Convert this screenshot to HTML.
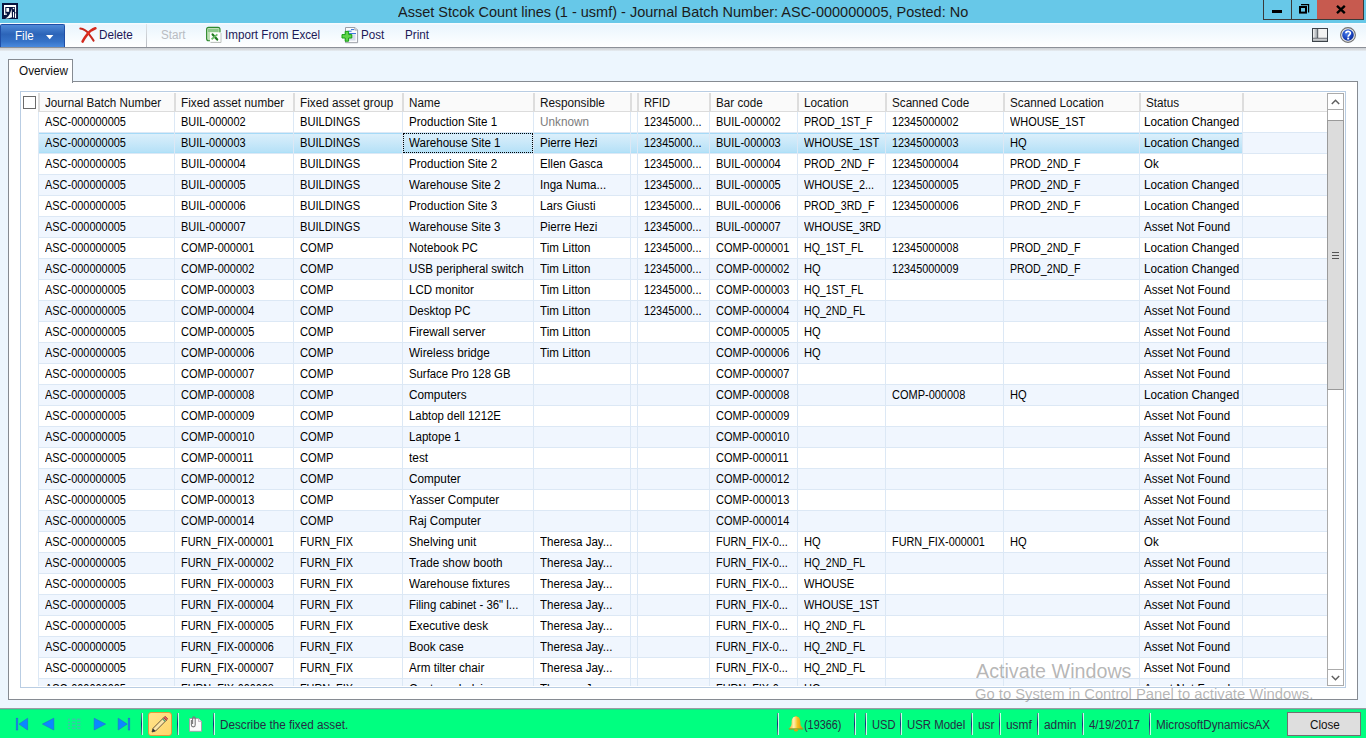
<!DOCTYPE html><html><head><meta charset="utf-8"><style>
*{box-sizing:border-box}
html,body{margin:0;padding:0}
body{width:1366px;height:738px;overflow:hidden;position:relative;background:#edf6fe;font-family:"Liberation Sans",sans-serif;color:#000}
.t{position:absolute;white-space:pre;transform-origin:0 0}
.a{position:absolute}
</style></head><body>

<div class="a" style="left:0;top:0;width:1366px;height:23px;background:#67c8e8"></div>
<svg class="a" style="left:2px;top:3px" width="16" height="16" viewBox="0 0 16 16">
<rect width="16" height="16" fill="#07133f"/>
<rect x="2" y="2" width="12" height="2" fill="#fff"/>
<rect x="2" y="2" width="1.3" height="10" fill="#fff"/>
<rect x="2" y="10.6" width="3" height="1.1" fill="#fff"/>
<rect x="12.9" y="2" width="1.2" height="7.5" fill="#fff"/>
<rect x="4.3" y="5" width="2.8" height="3.8" fill="#fff"/>
<path d="M3.2 15.5 C6 14.2 8.4 11.5 9.6 5.2 L10 14.2 C8 15 5.5 15.5 3.2 15.5z" fill="#fff"/>
<circle cx="11.5" cy="5.5" r="0.8" fill="#fff"/>
<rect x="11" y="9" width="1" height="5.5" fill="#fff"/>
<rect x="12.9" y="10.2" width="1.2" height="4.8" fill="#fff"/>
</svg>
<span class="t" style="left:398px;top:3px;font-size:15px;line-height:17px;color:#1b1b1b;transform:scaleX(0.966);">Asset Stcok Count lines (1 - usmf) - Journal Batch Number: ASC-000000005, Posted: No</span>
<div class="a" style="left:1263px;top:0;width:29px;height:20px;border-left:1px solid #3a3a3a;border-bottom:1px solid #3a3a3a;border-right:1px solid #3a3a3a;background:#67c8e8"></div>
<div class="a" style="left:1272px;top:10px;width:10px;height:3px;background:#000"></div>
<div class="a" style="left:1292px;top:0;width:25px;height:20px;border-bottom:1px solid #3a3a3a;background:#67c8e8"></div>
<svg class="a" style="left:1299px;top:4px" width="12" height="11" viewBox="0 0 12 11"><rect x="1" y="3" width="6" height="5.6" fill="none" stroke="#000" stroke-width="2"/><path d="M2 0.6H9.6V8.4" fill="none" stroke="#000" stroke-width="1.2"/></svg>
<div class="a" style="left:1317px;top:0;width:47px;height:20px;border-bottom:1px solid #3a3a3a;border-right:1px solid #3a3a3a;background:#c75a4f"></div>
<svg class="a" style="left:1336px;top:5px" width="10" height="9" viewBox="0 0 10 9"><path d="M1 0.8L8.8 8.2M8.8 0.8L1 8.2" stroke="#000" stroke-width="2.3"/></svg>
<div class="a" style="left:0;top:23px;width:1366px;height:24px;background:linear-gradient(#f6fbff 0px,#f6fbff 1px,#eaf5fd 2px,#ffffff)"></div>
<div class="a" style="left:0;top:47px;width:1366px;height:1px;background:#8c9098"></div>
<div class="a" style="left:0;top:48px;width:1366px;height:3px;background:linear-gradient(#cdd0d4,#d9dce0 55%,#e8eef4)"></div>
<div class="a" style="left:0px;top:24px;width:65px;height:23px;border-radius:2px 2px 0 0;background:linear-gradient(#4f8ad8,#2c64b8 42%,#3572c8 75%,#4a8ade);border:1px solid #1f4ea6;border-bottom:none"></div>
<span class="t" style="left:15px;top:29px;font-size:12px;line-height:14px;color:#ffffff;transform:scaleX(0.967);">File</span>
<svg class="a" style="left:46px;top:35px" width="8" height="5" viewBox="0 0 8 5"><path d="M0 0h7.4L3.7 4.2z" fill="#fff"/></svg>
<svg class="a" style="left:76px;top:24px" width="24" height="22" viewBox="0 0 24 22">
<path d="M4.3 4.6 C8 5 10.6 7 12.6 9.6 C14.6 12.2 16.3 14.6 17.6 16.6" fill="none" stroke="#c8281c" stroke-width="2" stroke-linecap="round"/>
<path d="M19.4 4.3 C16 5.4 13.4 7.6 11.4 10.2 C9.2 13 7.4 15.6 6.6 17.6" fill="none" stroke="#d42a1e" stroke-width="2.6" stroke-linecap="round"/>
<path d="M12 9 L13 10" stroke="#f03020" stroke-width="2"/>
</svg>
<span class="t" style="left:99px;top:28px;font-size:12px;line-height:14px;color:#1c1857;transform:scaleX(0.975);">Delete</span>
<div class="a" style="left:146px;top:24px;width:1px;height:23px;background:linear-gradient(#e0e4e8,#b8bcc2)"></div>
<span class="t" style="left:161px;top:28px;font-size:12px;line-height:14px;color:#b9bcc2;transform:scaleX(0.971);">Start</span>
<svg class="a" style="left:202px;top:24px" width="24" height="22" viewBox="0 0 24 22">
<rect x="4.6" y="3.4" width="13.4" height="13.4" rx="2" fill="#bfe0b8" stroke="#2f8a2f" stroke-width="1.1"/>
<rect x="6" y="5" width="10.5" height="3" fill="#8cc88a"/>
<rect x="8" y="8.4" width="11" height="9.4" fill="#ffffff"/>
<path d="M19 9v9.5h-10.5" fill="none" stroke="#b0b4b0" stroke-width="0.8"/>
<path d="M10.6 10.4 L15.2 15.6" stroke="#1e7a1e" stroke-width="2.2" stroke-linecap="round"/>
<path d="M15.4 10.4 L9.6 15.2" stroke="#6cbc6a" stroke-width="1.8"/>
</svg>
<span class="t" style="left:225px;top:28px;font-size:12px;line-height:14px;color:#1c1857;transform:scaleX(0.971);">Import From Excel</span>
<svg class="a" style="left:338px;top:24px" width="24" height="22" viewBox="0 0 24 22">
<path d="M7.5 3.5h9.5l2.6 2.6v12.6h-12.1z" fill="#fbfbfd" stroke="#9a9ea6" stroke-width="1"/>
<path d="M16.8 3.5v2.6h2.8" fill="#dde" stroke="#9a9ea6" stroke-width="0.8"/>
<path d="M13 5.6h3M9.6 7.2h4M11 9.6h7" stroke="#2a6ad8" stroke-width="1"/>
<rect x="11" y="10.6" width="6.5" height="6" fill="#d6dcea"/>
<path d="M7.2 7.4h3.4v3.2h3.2v3.4h-3.2v3.2h-3.4v-3.2h-3.2v-3.4h3.2z" fill="#5fd44a" stroke="#15a015" stroke-width="1"/>
</svg>
<span class="t" style="left:361px;top:28px;font-size:12px;line-height:14px;color:#1c1857;transform:scaleX(0.970);">Post</span>
<span class="t" style="left:405px;top:28px;font-size:12px;line-height:14px;color:#1c1857;transform:scaleX(0.970);">Print</span>
<svg class="a" style="left:1308px;top:24px" width="24" height="22" viewBox="0 0 24 22">
<defs><linearGradient id="lg1" x1="0" x2="1"><stop offset="0" stop-color="#f4f4f4"/><stop offset="1" stop-color="#9aa0a6"/></linearGradient>
<linearGradient id="lg2" x1="0" x2="0" y1="0" y2="1"><stop offset="0" stop-color="#d8dadc"/><stop offset="1" stop-color="#a4a8ac"/></linearGradient></defs>
<rect x="4.5" y="4.5" width="15" height="13" fill="#f2f2f2" stroke="#3c4249" stroke-width="1"/>
<rect x="5" y="5" width="4.3" height="9" fill="url(#lg1)"/>
<path d="M9.7 5v9M5 14.3h14.5" stroke="#3c4249" stroke-width="0.9"/>
<rect x="5" y="14.8" width="14" height="2.2" fill="url(#lg2)"/>
</svg>
<svg class="a" style="left:1340px;top:27px" width="16" height="16" viewBox="0 0 16 16">
<defs><radialGradient id="hg" cx="0.4" cy="0.35" r="0.7"><stop offset="0" stop-color="#4d7ee8"/><stop offset="0.6" stop-color="#1a45c0"/><stop offset="1" stop-color="#0a2a90"/></radialGradient></defs>
<circle cx="8" cy="8" r="7.4" fill="#ececec" stroke="#707070" stroke-width="1.1"/>
<circle cx="8" cy="8" r="5.8" fill="url(#hg)"/>
<path d="M5.9 6.2 C5.9 3.9 10.4 3.9 10.4 6.1 C10.4 7.8 8.2 7.9 8.2 9.7" fill="none" stroke="#fff" stroke-width="1.7"/>
<rect x="7.2" y="10.6" width="2" height="1.9" fill="#fff"/>
</svg>
<div class="a" style="left:8px;top:81px;width:1350px;height:619px;background:#fff;border:1px solid #868b92"></div>
<div class="a" style="left:8px;top:59px;width:65px;height:24px;background:#fff;border:1px solid #868b92;border-bottom:none"></div>
<span class="t" style="left:19px;top:64px;font-size:12px;line-height:14px;color:#111;transform:scaleX(0.979);">Overview</span>
<div class="a" style="left:20px;top:91px;width:1326px;height:597px;background:#fff;border:1px solid #b9cde3"></div>
<div class="a" style="left:38px;top:93px;width:1289px;height:18px;background:#fafafa"></div>
<div class="a" style="left:38px;top:93px;width:2px;height:18px;background:#dddddd"></div>
<div class="a" style="left:174px;top:93px;width:2px;height:18px;background:#dddddd"></div>
<div class="a" style="left:293px;top:93px;width:2px;height:18px;background:#dddddd"></div>
<div class="a" style="left:402px;top:93px;width:2px;height:18px;background:#dddddd"></div>
<div class="a" style="left:533px;top:93px;width:2px;height:18px;background:#dddddd"></div>
<div class="a" style="left:630px;top:93px;width:2px;height:18px;background:#dddddd"></div>
<div class="a" style="left:637px;top:93px;width:2px;height:18px;background:#dddddd"></div>
<div class="a" style="left:709px;top:93px;width:2px;height:18px;background:#dddddd"></div>
<div class="a" style="left:797px;top:93px;width:2px;height:18px;background:#dddddd"></div>
<div class="a" style="left:885px;top:93px;width:2px;height:18px;background:#dddddd"></div>
<div class="a" style="left:1003px;top:93px;width:2px;height:18px;background:#dddddd"></div>
<div class="a" style="left:1139px;top:93px;width:2px;height:18px;background:#dddddd"></div>
<div class="a" style="left:1242px;top:93px;width:2px;height:18px;background:#dddddd"></div>
<div class="a" style="left:38px;top:111px;width:1289px;height:1px;background:#dcdcdc"></div>
<span class="t" style="left:45px;top:96px;font-size:12px;line-height:14px;color:#111;transform:scaleX(0.972);">Journal Batch Number</span>
<span class="t" style="left:181px;top:96px;font-size:12px;line-height:14px;color:#111;transform:scaleX(0.979);">Fixed asset number</span>
<span class="t" style="left:300px;top:96px;font-size:12px;line-height:14px;color:#111;transform:scaleX(0.978);">Fixed asset group</span>
<span class="t" style="left:409px;top:96px;font-size:12px;line-height:14px;color:#111;transform:scaleX(0.973);">Name</span>
<span class="t" style="left:540px;top:96px;font-size:12px;line-height:14px;color:#111;transform:scaleX(0.982);">Responsible</span>
<span class="t" style="left:644px;top:96px;font-size:12px;line-height:14px;color:#111;transform:scaleX(0.929);">RFID</span>
<span class="t" style="left:716px;top:96px;font-size:12px;line-height:14px;color:#111;transform:scaleX(0.972);">Bar code</span>
<span class="t" style="left:804px;top:96px;font-size:12px;line-height:14px;color:#111;transform:scaleX(0.981);">Location</span>
<span class="t" style="left:892px;top:96px;font-size:12px;line-height:14px;color:#111;transform:scaleX(0.973);">Scanned Code</span>
<span class="t" style="left:1010px;top:96px;font-size:12px;line-height:14px;color:#111;transform:scaleX(0.977);">Scanned Location</span>
<span class="t" style="left:1146px;top:96px;font-size:12px;line-height:14px;color:#111;transform:scaleX(0.976);">Status</span>
<div class="a" style="left:23px;top:96px;width:13px;height:13px;border:1.5px solid #6b6b6b;background:#fff"></div>
<div class="a" style="left:21px;top:112px;width:1306px;height:574px;overflow:hidden">
<div class="a" style="left:17px;top:0px;width:1289px;height:21px;background:#ffffff;border-bottom:1px solid #dce8f5"></div>
<div class="a" style="left:17px;top:21px;width:1289px;height:21px;background:#f0f6fe;border-bottom:1px solid #dce8f5"></div>
<div class="a" style="left:17px;top:21px;width:1204px;height:20px;background:linear-gradient(#dbeffb,#b6e1f7);border-top:1px solid #a6daf7;border-bottom:1px solid #ace0f8"></div>
<div class="a" style="left:17px;top:42px;width:1289px;height:21px;background:#ffffff;border-bottom:1px solid #dce8f5"></div>
<div class="a" style="left:17px;top:63px;width:1289px;height:21px;background:#f0f6fe;border-bottom:1px solid #dce8f5"></div>
<div class="a" style="left:17px;top:84px;width:1289px;height:21px;background:#ffffff;border-bottom:1px solid #dce8f5"></div>
<div class="a" style="left:17px;top:105px;width:1289px;height:21px;background:#f0f6fe;border-bottom:1px solid #dce8f5"></div>
<div class="a" style="left:17px;top:126px;width:1289px;height:21px;background:#ffffff;border-bottom:1px solid #dce8f5"></div>
<div class="a" style="left:17px;top:147px;width:1289px;height:21px;background:#f0f6fe;border-bottom:1px solid #dce8f5"></div>
<div class="a" style="left:17px;top:168px;width:1289px;height:21px;background:#ffffff;border-bottom:1px solid #dce8f5"></div>
<div class="a" style="left:17px;top:189px;width:1289px;height:21px;background:#f0f6fe;border-bottom:1px solid #dce8f5"></div>
<div class="a" style="left:17px;top:210px;width:1289px;height:21px;background:#ffffff;border-bottom:1px solid #dce8f5"></div>
<div class="a" style="left:17px;top:231px;width:1289px;height:21px;background:#f0f6fe;border-bottom:1px solid #dce8f5"></div>
<div class="a" style="left:17px;top:252px;width:1289px;height:21px;background:#ffffff;border-bottom:1px solid #dce8f5"></div>
<div class="a" style="left:17px;top:273px;width:1289px;height:21px;background:#f0f6fe;border-bottom:1px solid #dce8f5"></div>
<div class="a" style="left:17px;top:294px;width:1289px;height:21px;background:#ffffff;border-bottom:1px solid #dce8f5"></div>
<div class="a" style="left:17px;top:315px;width:1289px;height:21px;background:#f0f6fe;border-bottom:1px solid #dce8f5"></div>
<div class="a" style="left:17px;top:336px;width:1289px;height:21px;background:#ffffff;border-bottom:1px solid #dce8f5"></div>
<div class="a" style="left:17px;top:357px;width:1289px;height:21px;background:#f0f6fe;border-bottom:1px solid #dce8f5"></div>
<div class="a" style="left:17px;top:378px;width:1289px;height:21px;background:#ffffff;border-bottom:1px solid #dce8f5"></div>
<div class="a" style="left:17px;top:399px;width:1289px;height:21px;background:#f0f6fe;border-bottom:1px solid #dce8f5"></div>
<div class="a" style="left:17px;top:420px;width:1289px;height:21px;background:#ffffff;border-bottom:1px solid #dce8f5"></div>
<div class="a" style="left:17px;top:441px;width:1289px;height:21px;background:#f0f6fe;border-bottom:1px solid #dce8f5"></div>
<div class="a" style="left:17px;top:462px;width:1289px;height:21px;background:#ffffff;border-bottom:1px solid #dce8f5"></div>
<div class="a" style="left:17px;top:483px;width:1289px;height:21px;background:#f0f6fe;border-bottom:1px solid #dce8f5"></div>
<div class="a" style="left:17px;top:504px;width:1289px;height:21px;background:#ffffff;border-bottom:1px solid #dce8f5"></div>
<div class="a" style="left:17px;top:525px;width:1289px;height:21px;background:#f0f6fe;border-bottom:1px solid #dce8f5"></div>
<div class="a" style="left:17px;top:546px;width:1289px;height:21px;background:#ffffff;border-bottom:1px solid #dce8f5"></div>
<div class="a" style="left:17px;top:567px;width:1289px;height:21px;background:#f0f6fe;border-bottom:1px solid #dce8f5"></div>
<div class="a" style="left:17px;top:0;width:1px;height:575px;background:#dce8f5"></div>
<div class="a" style="left:153px;top:0;width:1px;height:575px;background:#dce8f5"></div>
<div class="a" style="left:272px;top:0;width:1px;height:575px;background:#dce8f5"></div>
<div class="a" style="left:381px;top:0;width:1px;height:575px;background:#dce8f5"></div>
<div class="a" style="left:512px;top:0;width:1px;height:575px;background:#dce8f5"></div>
<div class="a" style="left:609px;top:0;width:1px;height:575px;background:#dce8f5"></div>
<div class="a" style="left:616px;top:0;width:1px;height:575px;background:#dce8f5"></div>
<div class="a" style="left:688px;top:0;width:1px;height:575px;background:#dce8f5"></div>
<div class="a" style="left:776px;top:0;width:1px;height:575px;background:#dce8f5"></div>
<div class="a" style="left:864px;top:0;width:1px;height:575px;background:#dce8f5"></div>
<div class="a" style="left:982px;top:0;width:1px;height:575px;background:#dce8f5"></div>
<div class="a" style="left:1118px;top:0;width:1px;height:575px;background:#dce8f5"></div>
<div class="a" style="left:1221px;top:0;width:1px;height:575px;background:#dce8f5"></div>
<span class="t" style="left:24px;top:3px;font-size:12px;line-height:14px;color:#000;transform:scaleX(0.912);">ASC-000000005</span>
<span class="t" style="left:160px;top:3px;font-size:12px;line-height:14px;color:#000;transform:scaleX(0.914);">BUIL-000002</span>
<span class="t" style="left:279px;top:3px;font-size:12px;line-height:14px;color:#000;transform:scaleX(0.929);">BUILDINGS</span>
<span class="t" style="left:388px;top:3px;font-size:12px;line-height:14px;color:#000;transform:scaleX(0.965);">Production Site 1</span>
<span class="t" style="left:519px;top:3px;font-size:12px;line-height:14px;color:#7c7c7c;transform:scaleX(0.979);">Unknown</span>
<span class="t" style="left:623px;top:3px;font-size:12px;line-height:14px;color:#000;transform:scaleX(0.906);">12345000...</span>
<span class="t" style="left:695px;top:3px;font-size:12px;line-height:14px;color:#000;transform:scaleX(0.914);">BUIL-000002</span>
<span class="t" style="left:783px;top:3px;font-size:12px;line-height:14px;color:#000;transform:scaleX(0.887);">PROD_1ST_F</span>
<span class="t" style="left:871px;top:3px;font-size:12px;line-height:14px;color:#000;transform:scaleX(0.905);">12345000002</span>
<span class="t" style="left:989px;top:3px;font-size:12px;line-height:14px;color:#000;transform:scaleX(0.909);">WHOUSE_1ST</span>
<span class="t" style="left:1123px;top:3px;font-size:12px;line-height:14px;color:#000;transform:scaleX(0.977);">Location Changed</span>
<span class="t" style="left:24px;top:24px;font-size:12px;line-height:14px;color:#000;transform:scaleX(0.912);">ASC-000000005</span>
<span class="t" style="left:160px;top:24px;font-size:12px;line-height:14px;color:#000;transform:scaleX(0.914);">BUIL-000003</span>
<span class="t" style="left:279px;top:24px;font-size:12px;line-height:14px;color:#000;transform:scaleX(0.929);">BUILDINGS</span>
<span class="t" style="left:388px;top:24px;font-size:12px;line-height:14px;color:#000;transform:scaleX(0.964);">Warehouse Site 1</span>
<span class="t" style="left:519px;top:24px;font-size:12px;line-height:14px;color:#000;transform:scaleX(0.967);">Pierre Hezi</span>
<span class="t" style="left:623px;top:24px;font-size:12px;line-height:14px;color:#000;transform:scaleX(0.906);">12345000...</span>
<span class="t" style="left:695px;top:24px;font-size:12px;line-height:14px;color:#000;transform:scaleX(0.914);">BUIL-000003</span>
<span class="t" style="left:783px;top:24px;font-size:12px;line-height:14px;color:#000;transform:scaleX(0.909);">WHOUSE_1ST</span>
<span class="t" style="left:871px;top:24px;font-size:12px;line-height:14px;color:#000;transform:scaleX(0.905);">12345000003</span>
<span class="t" style="left:989px;top:24px;font-size:12px;line-height:14px;color:#000;transform:scaleX(0.929);">HQ</span>
<span class="t" style="left:1123px;top:24px;font-size:12px;line-height:14px;color:#000;transform:scaleX(0.977);">Location Changed</span>
<span class="t" style="left:24px;top:45px;font-size:12px;line-height:14px;color:#000;transform:scaleX(0.912);">ASC-000000005</span>
<span class="t" style="left:160px;top:45px;font-size:12px;line-height:14px;color:#000;transform:scaleX(0.914);">BUIL-000004</span>
<span class="t" style="left:279px;top:45px;font-size:12px;line-height:14px;color:#000;transform:scaleX(0.929);">BUILDINGS</span>
<span class="t" style="left:388px;top:45px;font-size:12px;line-height:14px;color:#000;transform:scaleX(0.965);">Production Site 2</span>
<span class="t" style="left:519px;top:45px;font-size:12px;line-height:14px;color:#000;transform:scaleX(0.968);">Ellen Gasca</span>
<span class="t" style="left:623px;top:45px;font-size:12px;line-height:14px;color:#000;transform:scaleX(0.906);">12345000...</span>
<span class="t" style="left:695px;top:45px;font-size:12px;line-height:14px;color:#000;transform:scaleX(0.914);">BUIL-000004</span>
<span class="t" style="left:783px;top:45px;font-size:12px;line-height:14px;color:#000;transform:scaleX(0.888);">PROD_2ND_F</span>
<span class="t" style="left:871px;top:45px;font-size:12px;line-height:14px;color:#000;transform:scaleX(0.905);">12345000004</span>
<span class="t" style="left:989px;top:45px;font-size:12px;line-height:14px;color:#000;transform:scaleX(0.888);">PROD_2ND_F</span>
<span class="t" style="left:1123px;top:45px;font-size:12px;line-height:14px;color:#000;transform:scaleX(0.953);">Ok</span>
<span class="t" style="left:24px;top:66px;font-size:12px;line-height:14px;color:#000;transform:scaleX(0.912);">ASC-000000005</span>
<span class="t" style="left:160px;top:66px;font-size:12px;line-height:14px;color:#000;transform:scaleX(0.914);">BUIL-000005</span>
<span class="t" style="left:279px;top:66px;font-size:12px;line-height:14px;color:#000;transform:scaleX(0.929);">BUILDINGS</span>
<span class="t" style="left:388px;top:66px;font-size:12px;line-height:14px;color:#000;transform:scaleX(0.964);">Warehouse Site 2</span>
<span class="t" style="left:519px;top:66px;font-size:12px;line-height:14px;color:#000;transform:scaleX(0.962);">Inga Numa...</span>
<span class="t" style="left:623px;top:66px;font-size:12px;line-height:14px;color:#000;transform:scaleX(0.906);">12345000...</span>
<span class="t" style="left:695px;top:66px;font-size:12px;line-height:14px;color:#000;transform:scaleX(0.914);">BUIL-000005</span>
<span class="t" style="left:783px;top:66px;font-size:12px;line-height:14px;color:#000;transform:scaleX(0.905);">WHOUSE_2...</span>
<span class="t" style="left:871px;top:66px;font-size:12px;line-height:14px;color:#000;transform:scaleX(0.905);">12345000005</span>
<span class="t" style="left:989px;top:66px;font-size:12px;line-height:14px;color:#000;transform:scaleX(0.888);">PROD_2ND_F</span>
<span class="t" style="left:1123px;top:66px;font-size:12px;line-height:14px;color:#000;transform:scaleX(0.977);">Location Changed</span>
<span class="t" style="left:24px;top:87px;font-size:12px;line-height:14px;color:#000;transform:scaleX(0.912);">ASC-000000005</span>
<span class="t" style="left:160px;top:87px;font-size:12px;line-height:14px;color:#000;transform:scaleX(0.914);">BUIL-000006</span>
<span class="t" style="left:279px;top:87px;font-size:12px;line-height:14px;color:#000;transform:scaleX(0.929);">BUILDINGS</span>
<span class="t" style="left:388px;top:87px;font-size:12px;line-height:14px;color:#000;transform:scaleX(0.965);">Production Site 3</span>
<span class="t" style="left:519px;top:87px;font-size:12px;line-height:14px;color:#000;transform:scaleX(0.967);">Lars Giusti</span>
<span class="t" style="left:623px;top:87px;font-size:12px;line-height:14px;color:#000;transform:scaleX(0.906);">12345000...</span>
<span class="t" style="left:695px;top:87px;font-size:12px;line-height:14px;color:#000;transform:scaleX(0.914);">BUIL-000006</span>
<span class="t" style="left:783px;top:87px;font-size:12px;line-height:14px;color:#000;transform:scaleX(0.888);">PROD_3RD_F</span>
<span class="t" style="left:871px;top:87px;font-size:12px;line-height:14px;color:#000;transform:scaleX(0.905);">12345000006</span>
<span class="t" style="left:989px;top:87px;font-size:12px;line-height:14px;color:#000;transform:scaleX(0.888);">PROD_2ND_F</span>
<span class="t" style="left:1123px;top:87px;font-size:12px;line-height:14px;color:#000;transform:scaleX(0.977);">Location Changed</span>
<span class="t" style="left:24px;top:108px;font-size:12px;line-height:14px;color:#000;transform:scaleX(0.912);">ASC-000000005</span>
<span class="t" style="left:160px;top:108px;font-size:12px;line-height:14px;color:#000;transform:scaleX(0.914);">BUIL-000007</span>
<span class="t" style="left:279px;top:108px;font-size:12px;line-height:14px;color:#000;transform:scaleX(0.929);">BUILDINGS</span>
<span class="t" style="left:388px;top:108px;font-size:12px;line-height:14px;color:#000;transform:scaleX(0.964);">Warehouse Site 3</span>
<span class="t" style="left:519px;top:108px;font-size:12px;line-height:14px;color:#000;transform:scaleX(0.967);">Pierre Hezi</span>
<span class="t" style="left:623px;top:108px;font-size:12px;line-height:14px;color:#000;transform:scaleX(0.906);">12345000...</span>
<span class="t" style="left:695px;top:108px;font-size:12px;line-height:14px;color:#000;transform:scaleX(0.914);">BUIL-000007</span>
<span class="t" style="left:783px;top:108px;font-size:12px;line-height:14px;color:#000;transform:scaleX(0.909);">WHOUSE_3RD</span>
<span class="t" style="left:1123px;top:108px;font-size:12px;line-height:14px;color:#000;transform:scaleX(0.965);">Asset Not Found</span>
<span class="t" style="left:24px;top:129px;font-size:12px;line-height:14px;color:#000;transform:scaleX(0.912);">ASC-000000005</span>
<span class="t" style="left:160px;top:129px;font-size:12px;line-height:14px;color:#000;transform:scaleX(0.916);">COMP-000001</span>
<span class="t" style="left:279px;top:129px;font-size:12px;line-height:14px;color:#000;transform:scaleX(0.929);">COMP</span>
<span class="t" style="left:388px;top:129px;font-size:12px;line-height:14px;color:#000;transform:scaleX(0.963);">Notebook PC</span>
<span class="t" style="left:519px;top:129px;font-size:12px;line-height:14px;color:#000;transform:scaleX(0.967);">Tim Litton</span>
<span class="t" style="left:623px;top:129px;font-size:12px;line-height:14px;color:#000;transform:scaleX(0.906);">12345000...</span>
<span class="t" style="left:695px;top:129px;font-size:12px;line-height:14px;color:#000;transform:scaleX(0.916);">COMP-000001</span>
<span class="t" style="left:783px;top:129px;font-size:12px;line-height:14px;color:#000;transform:scaleX(0.881);">HQ_1ST_FL</span>
<span class="t" style="left:871px;top:129px;font-size:12px;line-height:14px;color:#000;transform:scaleX(0.905);">12345000008</span>
<span class="t" style="left:989px;top:129px;font-size:12px;line-height:14px;color:#000;transform:scaleX(0.888);">PROD_2ND_F</span>
<span class="t" style="left:1123px;top:129px;font-size:12px;line-height:14px;color:#000;transform:scaleX(0.977);">Location Changed</span>
<span class="t" style="left:24px;top:150px;font-size:12px;line-height:14px;color:#000;transform:scaleX(0.912);">ASC-000000005</span>
<span class="t" style="left:160px;top:150px;font-size:12px;line-height:14px;color:#000;transform:scaleX(0.916);">COMP-000002</span>
<span class="t" style="left:279px;top:150px;font-size:12px;line-height:14px;color:#000;transform:scaleX(0.929);">COMP</span>
<span class="t" style="left:388px;top:150px;font-size:12px;line-height:14px;color:#000;transform:scaleX(0.971);">USB peripheral switch</span>
<span class="t" style="left:519px;top:150px;font-size:12px;line-height:14px;color:#000;transform:scaleX(0.967);">Tim Litton</span>
<span class="t" style="left:623px;top:150px;font-size:12px;line-height:14px;color:#000;transform:scaleX(0.906);">12345000...</span>
<span class="t" style="left:695px;top:150px;font-size:12px;line-height:14px;color:#000;transform:scaleX(0.916);">COMP-000002</span>
<span class="t" style="left:783px;top:150px;font-size:12px;line-height:14px;color:#000;transform:scaleX(0.929);">HQ</span>
<span class="t" style="left:871px;top:150px;font-size:12px;line-height:14px;color:#000;transform:scaleX(0.905);">12345000009</span>
<span class="t" style="left:989px;top:150px;font-size:12px;line-height:14px;color:#000;transform:scaleX(0.888);">PROD_2ND_F</span>
<span class="t" style="left:1123px;top:150px;font-size:12px;line-height:14px;color:#000;transform:scaleX(0.977);">Location Changed</span>
<span class="t" style="left:24px;top:171px;font-size:12px;line-height:14px;color:#000;transform:scaleX(0.912);">ASC-000000005</span>
<span class="t" style="left:160px;top:171px;font-size:12px;line-height:14px;color:#000;transform:scaleX(0.916);">COMP-000003</span>
<span class="t" style="left:279px;top:171px;font-size:12px;line-height:14px;color:#000;transform:scaleX(0.929);">COMP</span>
<span class="t" style="left:388px;top:171px;font-size:12px;line-height:14px;color:#000;transform:scaleX(0.963);">LCD monitor</span>
<span class="t" style="left:519px;top:171px;font-size:12px;line-height:14px;color:#000;transform:scaleX(0.967);">Tim Litton</span>
<span class="t" style="left:623px;top:171px;font-size:12px;line-height:14px;color:#000;transform:scaleX(0.906);">12345000...</span>
<span class="t" style="left:695px;top:171px;font-size:12px;line-height:14px;color:#000;transform:scaleX(0.916);">COMP-000003</span>
<span class="t" style="left:783px;top:171px;font-size:12px;line-height:14px;color:#000;transform:scaleX(0.881);">HQ_1ST_FL</span>
<span class="t" style="left:1123px;top:171px;font-size:12px;line-height:14px;color:#000;transform:scaleX(0.965);">Asset Not Found</span>
<span class="t" style="left:24px;top:192px;font-size:12px;line-height:14px;color:#000;transform:scaleX(0.912);">ASC-000000005</span>
<span class="t" style="left:160px;top:192px;font-size:12px;line-height:14px;color:#000;transform:scaleX(0.916);">COMP-000004</span>
<span class="t" style="left:279px;top:192px;font-size:12px;line-height:14px;color:#000;transform:scaleX(0.929);">COMP</span>
<span class="t" style="left:388px;top:192px;font-size:12px;line-height:14px;color:#000;transform:scaleX(0.960);">Desktop PC</span>
<span class="t" style="left:519px;top:192px;font-size:12px;line-height:14px;color:#000;transform:scaleX(0.967);">Tim Litton</span>
<span class="t" style="left:623px;top:192px;font-size:12px;line-height:14px;color:#000;transform:scaleX(0.906);">12345000...</span>
<span class="t" style="left:695px;top:192px;font-size:12px;line-height:14px;color:#000;transform:scaleX(0.916);">COMP-000004</span>
<span class="t" style="left:783px;top:192px;font-size:12px;line-height:14px;color:#000;transform:scaleX(0.883);">HQ_2ND_FL</span>
<span class="t" style="left:1123px;top:192px;font-size:12px;line-height:14px;color:#000;transform:scaleX(0.965);">Asset Not Found</span>
<span class="t" style="left:24px;top:213px;font-size:12px;line-height:14px;color:#000;transform:scaleX(0.912);">ASC-000000005</span>
<span class="t" style="left:160px;top:213px;font-size:12px;line-height:14px;color:#000;transform:scaleX(0.916);">COMP-000005</span>
<span class="t" style="left:279px;top:213px;font-size:12px;line-height:14px;color:#000;transform:scaleX(0.929);">COMP</span>
<span class="t" style="left:388px;top:213px;font-size:12px;line-height:14px;color:#000;transform:scaleX(0.980);">Firewall server</span>
<span class="t" style="left:519px;top:213px;font-size:12px;line-height:14px;color:#000;transform:scaleX(0.967);">Tim Litton</span>
<span class="t" style="left:695px;top:213px;font-size:12px;line-height:14px;color:#000;transform:scaleX(0.916);">COMP-000005</span>
<span class="t" style="left:783px;top:213px;font-size:12px;line-height:14px;color:#000;transform:scaleX(0.929);">HQ</span>
<span class="t" style="left:1123px;top:213px;font-size:12px;line-height:14px;color:#000;transform:scaleX(0.965);">Asset Not Found</span>
<span class="t" style="left:24px;top:234px;font-size:12px;line-height:14px;color:#000;transform:scaleX(0.912);">ASC-000000005</span>
<span class="t" style="left:160px;top:234px;font-size:12px;line-height:14px;color:#000;transform:scaleX(0.916);">COMP-000006</span>
<span class="t" style="left:279px;top:234px;font-size:12px;line-height:14px;color:#000;transform:scaleX(0.929);">COMP</span>
<span class="t" style="left:388px;top:234px;font-size:12px;line-height:14px;color:#000;transform:scaleX(0.977);">Wireless bridge</span>
<span class="t" style="left:519px;top:234px;font-size:12px;line-height:14px;color:#000;transform:scaleX(0.967);">Tim Litton</span>
<span class="t" style="left:695px;top:234px;font-size:12px;line-height:14px;color:#000;transform:scaleX(0.916);">COMP-000006</span>
<span class="t" style="left:783px;top:234px;font-size:12px;line-height:14px;color:#000;transform:scaleX(0.929);">HQ</span>
<span class="t" style="left:1123px;top:234px;font-size:12px;line-height:14px;color:#000;transform:scaleX(0.965);">Asset Not Found</span>
<span class="t" style="left:24px;top:255px;font-size:12px;line-height:14px;color:#000;transform:scaleX(0.912);">ASC-000000005</span>
<span class="t" style="left:160px;top:255px;font-size:12px;line-height:14px;color:#000;transform:scaleX(0.916);">COMP-000007</span>
<span class="t" style="left:279px;top:255px;font-size:12px;line-height:14px;color:#000;transform:scaleX(0.929);">COMP</span>
<span class="t" style="left:388px;top:255px;font-size:12px;line-height:14px;color:#000;transform:scaleX(0.945);">Surface Pro 128 GB</span>
<span class="t" style="left:695px;top:255px;font-size:12px;line-height:14px;color:#000;transform:scaleX(0.916);">COMP-000007</span>
<span class="t" style="left:1123px;top:255px;font-size:12px;line-height:14px;color:#000;transform:scaleX(0.965);">Asset Not Found</span>
<span class="t" style="left:24px;top:276px;font-size:12px;line-height:14px;color:#000;transform:scaleX(0.912);">ASC-000000005</span>
<span class="t" style="left:160px;top:276px;font-size:12px;line-height:14px;color:#000;transform:scaleX(0.916);">COMP-000008</span>
<span class="t" style="left:279px;top:276px;font-size:12px;line-height:14px;color:#000;transform:scaleX(0.929);">COMP</span>
<span class="t" style="left:388px;top:276px;font-size:12px;line-height:14px;color:#000;transform:scaleX(0.981);">Computers</span>
<span class="t" style="left:695px;top:276px;font-size:12px;line-height:14px;color:#000;transform:scaleX(0.916);">COMP-000008</span>
<span class="t" style="left:871px;top:276px;font-size:12px;line-height:14px;color:#000;transform:scaleX(0.916);">COMP-000008</span>
<span class="t" style="left:989px;top:276px;font-size:12px;line-height:14px;color:#000;transform:scaleX(0.929);">HQ</span>
<span class="t" style="left:1123px;top:276px;font-size:12px;line-height:14px;color:#000;transform:scaleX(0.977);">Location Changed</span>
<span class="t" style="left:24px;top:297px;font-size:12px;line-height:14px;color:#000;transform:scaleX(0.912);">ASC-000000005</span>
<span class="t" style="left:160px;top:297px;font-size:12px;line-height:14px;color:#000;transform:scaleX(0.916);">COMP-000009</span>
<span class="t" style="left:279px;top:297px;font-size:12px;line-height:14px;color:#000;transform:scaleX(0.929);">COMP</span>
<span class="t" style="left:388px;top:297px;font-size:12px;line-height:14px;color:#000;transform:scaleX(0.950);">Labtop dell 1212E</span>
<span class="t" style="left:695px;top:297px;font-size:12px;line-height:14px;color:#000;transform:scaleX(0.916);">COMP-000009</span>
<span class="t" style="left:1123px;top:297px;font-size:12px;line-height:14px;color:#000;transform:scaleX(0.965);">Asset Not Found</span>
<span class="t" style="left:24px;top:318px;font-size:12px;line-height:14px;color:#000;transform:scaleX(0.912);">ASC-000000005</span>
<span class="t" style="left:160px;top:318px;font-size:12px;line-height:14px;color:#000;transform:scaleX(0.916);">COMP-000010</span>
<span class="t" style="left:279px;top:318px;font-size:12px;line-height:14px;color:#000;transform:scaleX(0.929);">COMP</span>
<span class="t" style="left:388px;top:318px;font-size:12px;line-height:14px;color:#000;transform:scaleX(0.965);">Laptope 1</span>
<span class="t" style="left:695px;top:318px;font-size:12px;line-height:14px;color:#000;transform:scaleX(0.916);">COMP-000010</span>
<span class="t" style="left:1123px;top:318px;font-size:12px;line-height:14px;color:#000;transform:scaleX(0.965);">Asset Not Found</span>
<span class="t" style="left:24px;top:339px;font-size:12px;line-height:14px;color:#000;transform:scaleX(0.912);">ASC-000000005</span>
<span class="t" style="left:160px;top:339px;font-size:12px;line-height:14px;color:#000;transform:scaleX(0.916);">COMP-000011</span>
<span class="t" style="left:279px;top:339px;font-size:12px;line-height:14px;color:#000;transform:scaleX(0.929);">COMP</span>
<span class="t" style="left:388px;top:339px;font-size:12px;line-height:14px;color:#000;transform:scaleX(0.990);">test</span>
<span class="t" style="left:695px;top:339px;font-size:12px;line-height:14px;color:#000;transform:scaleX(0.916);">COMP-000011</span>
<span class="t" style="left:1123px;top:339px;font-size:12px;line-height:14px;color:#000;transform:scaleX(0.965);">Asset Not Found</span>
<span class="t" style="left:24px;top:360px;font-size:12px;line-height:14px;color:#000;transform:scaleX(0.912);">ASC-000000005</span>
<span class="t" style="left:160px;top:360px;font-size:12px;line-height:14px;color:#000;transform:scaleX(0.916);">COMP-000012</span>
<span class="t" style="left:279px;top:360px;font-size:12px;line-height:14px;color:#000;transform:scaleX(0.929);">COMP</span>
<span class="t" style="left:388px;top:360px;font-size:12px;line-height:14px;color:#000;transform:scaleX(0.980);">Computer</span>
<span class="t" style="left:695px;top:360px;font-size:12px;line-height:14px;color:#000;transform:scaleX(0.916);">COMP-000012</span>
<span class="t" style="left:1123px;top:360px;font-size:12px;line-height:14px;color:#000;transform:scaleX(0.965);">Asset Not Found</span>
<span class="t" style="left:24px;top:381px;font-size:12px;line-height:14px;color:#000;transform:scaleX(0.912);">ASC-000000005</span>
<span class="t" style="left:160px;top:381px;font-size:12px;line-height:14px;color:#000;transform:scaleX(0.916);">COMP-000013</span>
<span class="t" style="left:279px;top:381px;font-size:12px;line-height:14px;color:#000;transform:scaleX(0.929);">COMP</span>
<span class="t" style="left:388px;top:381px;font-size:12px;line-height:14px;color:#000;transform:scaleX(0.975);">Yasser Computer</span>
<span class="t" style="left:695px;top:381px;font-size:12px;line-height:14px;color:#000;transform:scaleX(0.916);">COMP-000013</span>
<span class="t" style="left:1123px;top:381px;font-size:12px;line-height:14px;color:#000;transform:scaleX(0.965);">Asset Not Found</span>
<span class="t" style="left:24px;top:402px;font-size:12px;line-height:14px;color:#000;transform:scaleX(0.912);">ASC-000000005</span>
<span class="t" style="left:160px;top:402px;font-size:12px;line-height:14px;color:#000;transform:scaleX(0.916);">COMP-000014</span>
<span class="t" style="left:279px;top:402px;font-size:12px;line-height:14px;color:#000;transform:scaleX(0.929);">COMP</span>
<span class="t" style="left:388px;top:402px;font-size:12px;line-height:14px;color:#000;transform:scaleX(0.971);">Raj Computer</span>
<span class="t" style="left:695px;top:402px;font-size:12px;line-height:14px;color:#000;transform:scaleX(0.916);">COMP-000014</span>
<span class="t" style="left:1123px;top:402px;font-size:12px;line-height:14px;color:#000;transform:scaleX(0.965);">Asset Not Found</span>
<span class="t" style="left:24px;top:423px;font-size:12px;line-height:14px;color:#000;transform:scaleX(0.912);">ASC-000000005</span>
<span class="t" style="left:160px;top:423px;font-size:12px;line-height:14px;color:#000;transform:scaleX(0.904);">FURN_FIX-000001</span>
<span class="t" style="left:279px;top:423px;font-size:12px;line-height:14px;color:#000;transform:scaleX(0.903);">FURN_FIX</span>
<span class="t" style="left:388px;top:423px;font-size:12px;line-height:14px;color:#000;transform:scaleX(0.978);">Shelving unit</span>
<span class="t" style="left:519px;top:423px;font-size:12px;line-height:14px;color:#000;transform:scaleX(0.964);">Theresa Jay...</span>
<span class="t" style="left:695px;top:423px;font-size:12px;line-height:14px;color:#000;transform:scaleX(0.904);">FURN_FIX-0...</span>
<span class="t" style="left:783px;top:423px;font-size:12px;line-height:14px;color:#000;transform:scaleX(0.929);">HQ</span>
<span class="t" style="left:871px;top:423px;font-size:12px;line-height:14px;color:#000;transform:scaleX(0.904);">FURN_FIX-000001</span>
<span class="t" style="left:989px;top:423px;font-size:12px;line-height:14px;color:#000;transform:scaleX(0.929);">HQ</span>
<span class="t" style="left:1123px;top:423px;font-size:12px;line-height:14px;color:#000;transform:scaleX(0.953);">Ok</span>
<span class="t" style="left:24px;top:444px;font-size:12px;line-height:14px;color:#000;transform:scaleX(0.912);">ASC-000000005</span>
<span class="t" style="left:160px;top:444px;font-size:12px;line-height:14px;color:#000;transform:scaleX(0.904);">FURN_FIX-000002</span>
<span class="t" style="left:279px;top:444px;font-size:12px;line-height:14px;color:#000;transform:scaleX(0.903);">FURN_FIX</span>
<span class="t" style="left:388px;top:444px;font-size:12px;line-height:14px;color:#000;transform:scaleX(0.978);">Trade show booth</span>
<span class="t" style="left:519px;top:444px;font-size:12px;line-height:14px;color:#000;transform:scaleX(0.964);">Theresa Jay...</span>
<span class="t" style="left:695px;top:444px;font-size:12px;line-height:14px;color:#000;transform:scaleX(0.904);">FURN_FIX-0...</span>
<span class="t" style="left:783px;top:444px;font-size:12px;line-height:14px;color:#000;transform:scaleX(0.883);">HQ_2ND_FL</span>
<span class="t" style="left:1123px;top:444px;font-size:12px;line-height:14px;color:#000;transform:scaleX(0.965);">Asset Not Found</span>
<span class="t" style="left:24px;top:465px;font-size:12px;line-height:14px;color:#000;transform:scaleX(0.912);">ASC-000000005</span>
<span class="t" style="left:160px;top:465px;font-size:12px;line-height:14px;color:#000;transform:scaleX(0.904);">FURN_FIX-000003</span>
<span class="t" style="left:279px;top:465px;font-size:12px;line-height:14px;color:#000;transform:scaleX(0.903);">FURN_FIX</span>
<span class="t" style="left:388px;top:465px;font-size:12px;line-height:14px;color:#000;transform:scaleX(0.980);">Warehouse fixtures</span>
<span class="t" style="left:519px;top:465px;font-size:12px;line-height:14px;color:#000;transform:scaleX(0.964);">Theresa Jay...</span>
<span class="t" style="left:695px;top:465px;font-size:12px;line-height:14px;color:#000;transform:scaleX(0.904);">FURN_FIX-0...</span>
<span class="t" style="left:783px;top:465px;font-size:12px;line-height:14px;color:#000;transform:scaleX(0.929);">WHOUSE</span>
<span class="t" style="left:1123px;top:465px;font-size:12px;line-height:14px;color:#000;transform:scaleX(0.965);">Asset Not Found</span>
<span class="t" style="left:24px;top:486px;font-size:12px;line-height:14px;color:#000;transform:scaleX(0.912);">ASC-000000005</span>
<span class="t" style="left:160px;top:486px;font-size:12px;line-height:14px;color:#000;transform:scaleX(0.904);">FURN_FIX-000004</span>
<span class="t" style="left:279px;top:486px;font-size:12px;line-height:14px;color:#000;transform:scaleX(0.903);">FURN_FIX</span>
<span class="t" style="left:388px;top:486px;font-size:12px;line-height:14px;color:#000;transform:scaleX(0.951);">Filing cabinet - 36&quot; l...</span>
<span class="t" style="left:519px;top:486px;font-size:12px;line-height:14px;color:#000;transform:scaleX(0.964);">Theresa Jay...</span>
<span class="t" style="left:695px;top:486px;font-size:12px;line-height:14px;color:#000;transform:scaleX(0.904);">FURN_FIX-0...</span>
<span class="t" style="left:783px;top:486px;font-size:12px;line-height:14px;color:#000;transform:scaleX(0.909);">WHOUSE_1ST</span>
<span class="t" style="left:1123px;top:486px;font-size:12px;line-height:14px;color:#000;transform:scaleX(0.965);">Asset Not Found</span>
<span class="t" style="left:24px;top:507px;font-size:12px;line-height:14px;color:#000;transform:scaleX(0.912);">ASC-000000005</span>
<span class="t" style="left:160px;top:507px;font-size:12px;line-height:14px;color:#000;transform:scaleX(0.904);">FURN_FIX-000005</span>
<span class="t" style="left:279px;top:507px;font-size:12px;line-height:14px;color:#000;transform:scaleX(0.903);">FURN_FIX</span>
<span class="t" style="left:388px;top:507px;font-size:12px;line-height:14px;color:#000;transform:scaleX(0.979);">Executive desk</span>
<span class="t" style="left:519px;top:507px;font-size:12px;line-height:14px;color:#000;transform:scaleX(0.964);">Theresa Jay...</span>
<span class="t" style="left:695px;top:507px;font-size:12px;line-height:14px;color:#000;transform:scaleX(0.904);">FURN_FIX-0...</span>
<span class="t" style="left:783px;top:507px;font-size:12px;line-height:14px;color:#000;transform:scaleX(0.883);">HQ_2ND_FL</span>
<span class="t" style="left:1123px;top:507px;font-size:12px;line-height:14px;color:#000;transform:scaleX(0.965);">Asset Not Found</span>
<span class="t" style="left:24px;top:528px;font-size:12px;line-height:14px;color:#000;transform:scaleX(0.912);">ASC-000000005</span>
<span class="t" style="left:160px;top:528px;font-size:12px;line-height:14px;color:#000;transform:scaleX(0.904);">FURN_FIX-000006</span>
<span class="t" style="left:279px;top:528px;font-size:12px;line-height:14px;color:#000;transform:scaleX(0.903);">FURN_FIX</span>
<span class="t" style="left:388px;top:528px;font-size:12px;line-height:14px;color:#000;transform:scaleX(0.975);">Book case</span>
<span class="t" style="left:519px;top:528px;font-size:12px;line-height:14px;color:#000;transform:scaleX(0.964);">Theresa Jay...</span>
<span class="t" style="left:695px;top:528px;font-size:12px;line-height:14px;color:#000;transform:scaleX(0.904);">FURN_FIX-0...</span>
<span class="t" style="left:783px;top:528px;font-size:12px;line-height:14px;color:#000;transform:scaleX(0.883);">HQ_2ND_FL</span>
<span class="t" style="left:1123px;top:528px;font-size:12px;line-height:14px;color:#000;transform:scaleX(0.965);">Asset Not Found</span>
<span class="t" style="left:24px;top:549px;font-size:12px;line-height:14px;color:#000;transform:scaleX(0.912);">ASC-000000005</span>
<span class="t" style="left:160px;top:549px;font-size:12px;line-height:14px;color:#000;transform:scaleX(0.904);">FURN_FIX-000007</span>
<span class="t" style="left:279px;top:549px;font-size:12px;line-height:14px;color:#000;transform:scaleX(0.903);">FURN_FIX</span>
<span class="t" style="left:388px;top:549px;font-size:12px;line-height:14px;color:#000;transform:scaleX(0.974);">Arm tilter chair</span>
<span class="t" style="left:519px;top:549px;font-size:12px;line-height:14px;color:#000;transform:scaleX(0.964);">Theresa Jay...</span>
<span class="t" style="left:695px;top:549px;font-size:12px;line-height:14px;color:#000;transform:scaleX(0.904);">FURN_FIX-0...</span>
<span class="t" style="left:783px;top:549px;font-size:12px;line-height:14px;color:#000;transform:scaleX(0.883);">HQ_2ND_FL</span>
<span class="t" style="left:1123px;top:549px;font-size:12px;line-height:14px;color:#000;transform:scaleX(0.965);">Asset Not Found</span>
<span class="t" style="left:24px;top:570px;font-size:12px;line-height:14px;color:#000;transform:scaleX(0.912);">ASC-000000005</span>
<span class="t" style="left:160px;top:570px;font-size:12px;line-height:14px;color:#000;transform:scaleX(0.904);">FURN_FIX-000008</span>
<span class="t" style="left:279px;top:570px;font-size:12px;line-height:14px;color:#000;transform:scaleX(0.903);">FURN_FIX</span>
<span class="t" style="left:388px;top:570px;font-size:12px;line-height:14px;color:#000;transform:scaleX(0.980);">Custom shelving</span>
<span class="t" style="left:519px;top:570px;font-size:12px;line-height:14px;color:#000;transform:scaleX(0.964);">Theresa Jay...</span>
<span class="t" style="left:695px;top:570px;font-size:12px;line-height:14px;color:#000;transform:scaleX(0.904);">FURN_FIX-0...</span>
<span class="t" style="left:783px;top:570px;font-size:12px;line-height:14px;color:#000;transform:scaleX(0.929);">HQ</span>
<span class="t" style="left:1123px;top:570px;font-size:12px;line-height:14px;color:#000;transform:scaleX(0.965);">Asset Not Found</span>
</div>
<div class="a" style="left:403px;top:133px;width:130px;height:20px;border:1px dotted #000"></div>
<div class="a" style="left:1327px;top:93px;width:17px;height:593px;background:#fff;border:1px solid #ababab;border-top:none;border-bottom:none"></div>
<div class="a" style="left:1327px;top:93px;width:17px;height:17px;background:#fff;border:1px solid #ababab"></div>
<svg class="a" style="left:1331px;top:99px" width="9" height="6" viewBox="0 0 9 6"><path d="M0.8 5L4.5 1.3L8.2 5" fill="none" stroke="#606060" stroke-width="1.5"/></svg>
<div class="a" style="left:1327px;top:120px;width:17px;height:270px;background:#dcdcdc;border:1px solid #9a9a9a"></div>
<div class="a" style="left:1332px;top:252px;width:7px;height:1.2px;background:#555"></div>
<div class="a" style="left:1332px;top:255px;width:7px;height:1.2px;background:#555"></div>
<div class="a" style="left:1332px;top:258px;width:7px;height:1.2px;background:#555"></div>
<div class="a" style="left:1327px;top:669px;width:17px;height:17px;background:#fff;border:1px solid #ababab"></div>
<svg class="a" style="left:1331px;top:675px" width="9" height="6" viewBox="0 0 9 6"><path d="M0.8 1L4.5 4.7L8.2 1" fill="none" stroke="#606060" stroke-width="1.5"/></svg>
<span class="t" style="left:976px;top:660px;font-size:20px;line-height:23px;color:rgba(120,120,120,0.55);transform:scaleX(0.985);">Activate Windows</span>
<span class="t" style="left:975px;top:685px;font-size:15px;line-height:17px;color:rgba(120,120,120,0.55);transform:scaleX(0.985);">Go to System in Control Panel to activate Windows.</span>
<div class="a" style="left:0;top:708px;width:1366px;height:30px;background:#00ff80;border-top:1px solid #9c9ca4"></div>
<div class="a" style="left:0;top:709px;width:1366px;height:1px;background:#20d888"></div>
<svg class="a" style="left:10px;top:710px" width="130" height="26" viewBox="0 0 130 26">
<g fill="#0a88ff" stroke="#2a66d0" stroke-width="0.6">
<rect x="6.2" y="8.2" width="1.6" height="11.8"/><path d="M17.6 8.2v11.8L9 14.1z"/>
<path d="M43.8 8.2v11.8L32.4 14.1z"/>
<path d="M84.2 8.2v11.8L95.6 14.1z"/>
<path d="M108.2 8.2v11.8L117.2 14.1z"/><rect x="118.2" y="8.2" width="1.6" height="11.8"/>
</g>
<g fill="#4ab8b0" opacity="0.75">
<rect x="58" y="8.5" width="2" height="1.5"/><rect x="62" y="8.5" width="3.5" height="1.5"/><rect x="67" y="8.5" width="3.5" height="1.5"/>
<rect x="58" y="11.5" width="2" height="1.5"/><rect x="62" y="11.5" width="3.5" height="1.5"/><rect x="67" y="11.5" width="3.5" height="1.5"/>
<rect x="58" y="14.5" width="2" height="1.5"/><rect x="62" y="14.5" width="3.5" height="1.5"/><rect x="67" y="14.5" width="3.5" height="1.5"/>
<rect x="58" y="17.5" width="2" height="1.5"/><rect x="62" y="17.5" width="3.5" height="1.5"/><rect x="67" y="17.5" width="3.5" height="1.5"/>
</g>
</svg>
<div class="a" style="left:141px;top:713px;width:1px;height:22px;background:linear-gradient(#5a8a8a,#10307a 50%,#5a8a8a)"></div><div class="a" style="left:142px;top:713px;width:1px;height:22px;background:#c8ffe6"></div>
<div class="a" style="left:148px;top:712px;width:24px;height:24px;border-radius:3px;background:linear-gradient(135deg,#ffe38c,#ffd66a);border:1px solid #e39a3a"></div>
<svg class="a" style="left:148px;top:712px" width="24" height="24" viewBox="0 0 24 24">
<path d="M4 20 L5 16.4 L15.6 5.8 L18.2 8.4 L7.6 19 Z" fill="#fbe6a8" stroke="#5a4a30" stroke-width="0.9"/>
<path d="M15.6 5.8 L17.2 4.2 L19.8 6.8 L18.2 8.4 Z" fill="#e05a60" stroke="#8a3030" stroke-width="0.6"/>
<path d="M14.6 6.8 L17.2 9.4" stroke="#4a9a6a" stroke-width="1.2"/>
<path d="M4 20 L5 16.4 L7.6 19 Z" fill="#333"/>
</svg>
<div class="a" style="left:177px;top:713px;width:1px;height:22px;background:linear-gradient(#5a8a8a,#10307a 50%,#5a8a8a)"></div><div class="a" style="left:178px;top:713px;width:1px;height:22px;background:#c8ffe6"></div>
<svg class="a" style="left:188px;top:716px" width="15" height="17" viewBox="0 0 15 17">
<path d="M1.5 2.5h9l3 3v9.8h-12z" fill="#fafafa" stroke="#a898a8" stroke-width="0.9"/>
<path d="M10.5 2.5v3h3" fill="#e8e8e8" stroke="#a898a8" stroke-width="0.6"/>
<path d="M3.4 4 v5 a1.9 1.9 0 0 0 3.8 0 V2.2 a1.3 1.3 0 0 0 -2.6 0 V8" fill="none" stroke="#7a7a7a" stroke-width="1.1"/>
</svg>
<div class="a" style="left:213px;top:713px;width:1px;height:22px;background:linear-gradient(#5a8a8a,#10307a 50%,#5a8a8a)"></div><div class="a" style="left:214px;top:713px;width:1px;height:22px;background:#c8ffe6"></div>
<span class="t" style="left:220px;top:718px;font-size:12px;line-height:14px;color:#262c44;transform:scaleX(0.976);">Describe the fixed asset.</span>
<div class="a" style="left:777px;top:713px;width:1px;height:22px;background:linear-gradient(#5a8a8a,#10307a 50%,#5a8a8a)"></div><div class="a" style="left:778px;top:713px;width:1px;height:22px;background:#c8ffe6"></div>
<svg class="a" style="left:788px;top:715px" width="16" height="17" viewBox="0 0 16 17">
<defs><linearGradient id="bg1" x1="0" x2="1"><stop offset="0" stop-color="#e8a010"/><stop offset="0.35" stop-color="#fff0b0"/><stop offset="0.6" stop-color="#f6c020"/><stop offset="1" stop-color="#d08a08"/></linearGradient></defs>
<circle cx="8" cy="2" r="1" fill="#e0a010"/>
<path d="M8 1.6 C4.5 1.6 3.6 4.5 3.6 8 C3.6 11 2.4 12.2 0.6 13.4 H15.4 C13.6 12.2 12.4 11 12.4 8 C12.4 4.5 11.5 1.6 8 1.6z" fill="url(#bg1)"/>
<path d="M0.6 13.4 H15.4 L15 14.6 H1z" fill="#d07a00"/>
<ellipse cx="8" cy="15.2" rx="1.8" ry="1.2" fill="#e89a10"/>
</svg>
<span class="t" style="left:804px;top:718px;font-size:12px;line-height:14px;color:#262c44;transform:scaleX(0.906);">(19366)</span>
<div class="a" style="left:854px;top:713px;width:1px;height:22px;background:linear-gradient(#5a8a8a,#10307a 50%,#5a8a8a)"></div><div class="a" style="left:855px;top:713px;width:1px;height:22px;background:#c8ffe6"></div>
<div class="a" style="left:865px;top:713px;width:1px;height:22px;background:linear-gradient(#5a8a8a,#10307a 50%,#5a8a8a)"></div><div class="a" style="left:866px;top:713px;width:1px;height:22px;background:#c8ffe6"></div>
<span class="t" style="left:872px;top:718px;font-size:12px;line-height:14px;color:#262c44;transform:scaleX(0.929);">USD</span>
<div class="a" style="left:900px;top:713px;width:1px;height:22px;background:linear-gradient(#5a8a8a,#10307a 50%,#5a8a8a)"></div><div class="a" style="left:901px;top:713px;width:1px;height:22px;background:#c8ffe6"></div>
<span class="t" style="left:907px;top:718px;font-size:12px;line-height:14px;color:#262c44;transform:scaleX(0.949);">USR Model</span>
<div class="a" style="left:971px;top:713px;width:1px;height:22px;background:linear-gradient(#5a8a8a,#10307a 50%,#5a8a8a)"></div><div class="a" style="left:972px;top:713px;width:1px;height:22px;background:#c8ffe6"></div>
<span class="t" style="left:978px;top:718px;font-size:12px;line-height:14px;color:#262c44;transform:scaleX(0.990);">usr</span>
<div class="a" style="left:999px;top:713px;width:1px;height:22px;background:linear-gradient(#5a8a8a,#10307a 50%,#5a8a8a)"></div><div class="a" style="left:1000px;top:713px;width:1px;height:22px;background:#c8ffe6"></div>
<span class="t" style="left:1006px;top:718px;font-size:12px;line-height:14px;color:#262c44;transform:scaleX(0.990);">usmf</span>
<div class="a" style="left:1037px;top:713px;width:1px;height:22px;background:linear-gradient(#5a8a8a,#10307a 50%,#5a8a8a)"></div><div class="a" style="left:1038px;top:713px;width:1px;height:22px;background:#c8ffe6"></div>
<span class="t" style="left:1044px;top:718px;font-size:12px;line-height:14px;color:#262c44;transform:scaleX(0.990);">admin</span>
<div class="a" style="left:1082px;top:713px;width:1px;height:22px;background:linear-gradient(#5a8a8a,#10307a 50%,#5a8a8a)"></div><div class="a" style="left:1083px;top:713px;width:1px;height:22px;background:#c8ffe6"></div>
<span class="t" style="left:1089px;top:718px;font-size:12px;line-height:14px;color:#262c44;transform:scaleX(0.954);">4/19/2017</span>
<div class="a" style="left:1149px;top:713px;width:1px;height:22px;background:linear-gradient(#5a8a8a,#10307a 50%,#5a8a8a)"></div><div class="a" style="left:1150px;top:713px;width:1px;height:22px;background:#c8ffe6"></div>
<span class="t" style="left:1156px;top:718px;font-size:12px;line-height:14px;color:#262c44;transform:scaleX(0.972);">MicrosoftDynamicsAX</span>
<div class="a" style="left:1287px;top:712px;width:74px;height:24px;background:#dedede;border:1px solid #707070"></div>
<span class="t" style="left:1310px;top:718px;font-size:12px;line-height:14px;color:#111;transform:scaleX(0.973);">Close</span>
</body></html>
